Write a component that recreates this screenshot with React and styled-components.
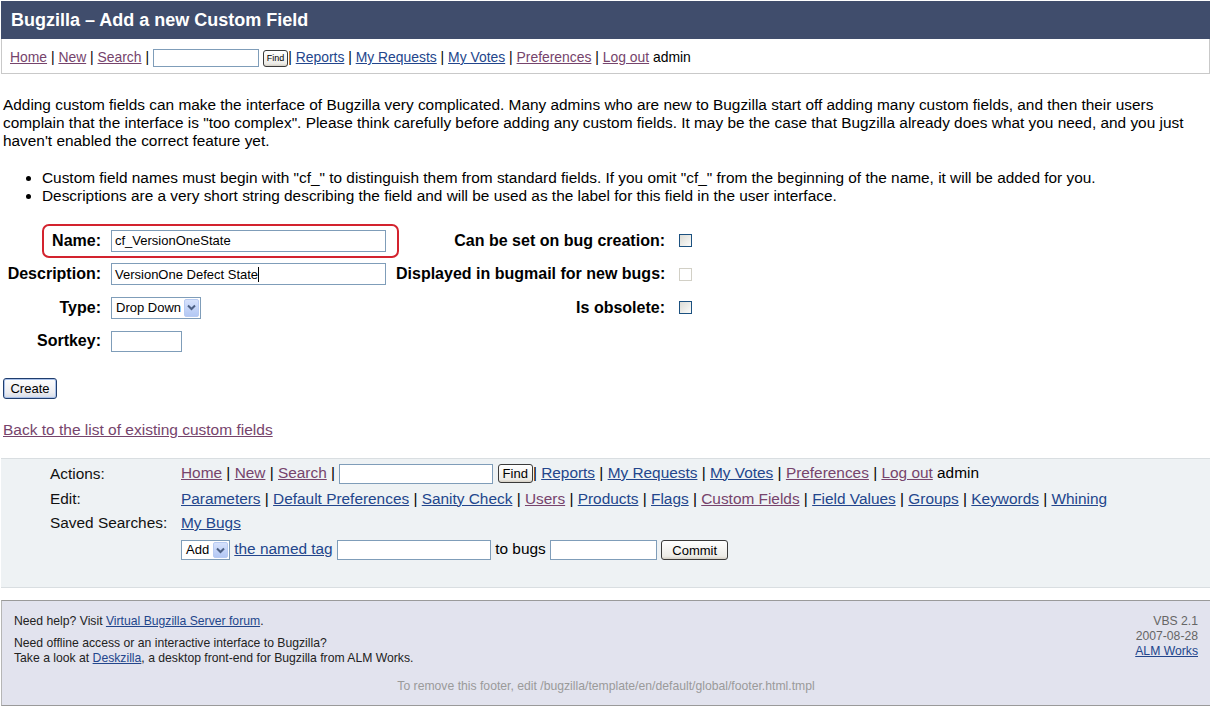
import React from "react";
import styled, { createGlobalStyle } from "styled-components";

const Global = createGlobalStyle`
  html, body { margin: 0; padding: 0; background: #fff; }
  body { font-family: "Liberation Sans", Arial, sans-serif; color: #000; }
  * { box-sizing: border-box; }
`;

const Page = styled.div`
  width: 1211px;
  padding: 1px 1px 0 1px;
`;

const Header = styled.div`
  height: 38px;
  background: #404d6c;
  display: flex;
  align-items: center;
  padding-left: 10px;
`;

const Title = styled.h1`
  margin: 0;
  font-size: 18px;
  font-weight: bold;
  color: #fff;
`;

const NavBar = styled.div`
  height: 35px;
  border: 1px solid #c9c9c9;
  border-top: none;
  padding: 9px 0 0 8px;
  font-size: 13.9px;
  line-height: 18px;
  white-space: nowrap;
`;

const Link = styled.a`
  color: ${(p) => (p.$visited ? "#76446c" : "#23468c")};
  text-decoration: underline;
  cursor: pointer;
`;

const TextBox = styled.input`
  width: ${(p) => p.$w}px;
  height: ${(p) => p.$h || 22}px;
  border: 1px solid #7f9db9;
  padding: 0 3px;
  font-family: "Liberation Sans", Arial, sans-serif;
  font-size: 13px;
  color: #000;
  background: #fff;
  vertical-align: middle;
  outline: none;
`;

const PlainButton = styled.button`
  font-family: "Liberation Sans", Arial, sans-serif;
  font-size: ${(p) => p.$fs || 13}px;
  height: ${(p) => p.$h}px;
  padding: 0 ${(p) => p.$px || 6}px;
  border: 1px solid #3a3a3a;
  border-radius: 3px;
  background: linear-gradient(#ffffff, #ecebe6 85%, #d6d0c5);
  color: #000;
  vertical-align: middle;
  line-height: 1;
`;

const Main = styled.div`
  padding: 0 2px;
`;

const Intro = styled.p`
  margin: 22px 0 0;
  font-size: 15.4px;
  line-height: 18px;
  white-space: nowrap;
`;

const Notes = styled.ul`
  margin: 19px 0 0;
  padding-left: 39px;
  font-size: 15.4px;
  line-height: 18px;
  white-space: nowrap;
`;

const FormGrid = styled.div`
  position: relative;
  margin-top: 19px;
  display: grid;
  grid-template-columns: 98px 275px 269px 20px;
  column-gap: 10px;
  grid-auto-rows: 33.5px;
  align-items: center;
`;

const Label = styled.label`
  text-align: right;
  font-weight: bold;
  font-size: 16px;
  white-space: nowrap;
`;

const Highlight = styled.div`
  position: absolute;
  left: 39px;
  top: 0;
  width: 357px;
  height: 34px;
  border: 2px solid #d3232e;
  border-radius: 7px;
  pointer-events: none;
`;

const Check = styled.span`
  display: block;
  width: 13px;
  height: 13px;
  margin-left: 4px;
  border: 1px solid ${(p) => (p.$disabled ? "#d2d0c6" : "#1c5180")};
  background: ${(p) => (p.$disabled ? "#fff" : "linear-gradient(135deg, #dcdcd6, #fbfbf9)")};
`;

const SelectBox = styled.span`
  display: inline-flex;
  align-items: center;
  justify-content: space-between;
  width: ${(p) => p.$w}px;
  height: ${(p) => p.$h}px;
  border: 1px solid #7f9db9;
  background: #fff;
  padding: 1px 1px 1px 4px;
  font-size: 13px;
  vertical-align: middle;
`;

const ArrowBtn = styled.span`
  display: flex;
  align-items: center;
  justify-content: center;
  width: 15px;
  height: 100%;
  background: linear-gradient(#d6e2fc, #b3c8f4);
  border: 1px solid #b8cbf2;
  border-radius: 2px;
`;

const Chevron = () => (
  <svg width="9" height="7" viewBox="0 0 9 7">
    <path d="M1 1.5 L4.5 5 L8 1.5" fill="none" stroke="#4d6185" strokeWidth="2" />
  </svg>
);

const Caret = styled.span`
  display: inline-block;
  width: 1px;
  height: 15px;
  background: #000;
  vertical-align: middle;
`;

const FakeField = styled.span`
  display: flex;
  align-items: center;
  width: 275px;
  height: 22px;
  border: 1px solid #7f9db9;
  padding: 0 3px;
  font-size: 13px;
  white-space: nowrap;
`;

const CreateButton = styled.button`
  margin-top: 20px;
  display: block;
  width: 54px;
  height: 21px;
  font-family: "Liberation Sans", Arial, sans-serif;
  font-size: 13px;
  color: #000;
  border: 1px solid #1f3d6d;
  border-radius: 3px;
  background: linear-gradient(#fdfdfd, #ecedf2 70%, #d4dbe7);
  box-shadow: inset 0 0 0 1px #a9c1ea;
  padding: 0;
`;

const BackLink = styled(Link)`
  display: block;
  margin-top: 22px;
  font-size: 15.5px;
  line-height: 18px;
  width: max-content;
`;

const ActionsPanel = styled.div`
  margin-top: 19px;
  background: #eef2f4;
  border-top: 1px solid #d9dee1;
  border-bottom: 1px solid #d9dee1;
  padding: 2px 0 22px 49px;
  display: grid;
  grid-template-columns: 131px auto;
  grid-template-rows: 25px 25px 24px 30px;
  align-items: center;
  font-size: 15.4px;
  line-height: 18px;
  white-space: nowrap;
`;

const ActionLabel = styled.span`
  color: #111;
`;

const Footer = styled.div`
  margin-top: 12px;
  background: #e2e3ee;
  border-top: 1px solid #9a9a9a;
  border-bottom: 1px solid #9a9a9a;
  border-left: 1px solid #b5b5b5;
  padding: 13px 12px 12px 12px;
  font-size: 12.2px;
  color: #222;
`;

const FooterTop = styled.div`
  display: flex;
  justify-content: space-between;
`;

const HelpLine = styled.div`
  line-height: 14px;
`;

const Offline = styled.div`
  margin-top: 8px;
  line-height: 15px;
`;

const Version = styled.div`
  text-align: right;
  line-height: 15px;
  color: #666;
`;

const RemoveNote = styled.div`
  margin-top: 13px;
  text-align: center;
  line-height: 14px;
  color: #9a9a9a;
`;

export default function App() {
  return (
    <Page>
      <Global />
      <Header>
        <Title>Bugzilla – Add a new Custom Field</Title>
      </Header>
      <NavBar>
        <Link $visited>Home</Link> | <Link $visited>New</Link> | <Link $visited>Search</Link> |{" "}
        <TextBox $w={106} $h={18} defaultValue="" />{" "}
        <PlainButton $fs={9} $h={17} $px={3}>Find</PlainButton>| <Link>Reports</Link> |{" "}
        <Link>My Requests</Link> | <Link>My Votes</Link> | <Link $visited>Preferences</Link> |{" "}
        <Link $visited>Log out</Link> admin
      </NavBar>
      <Main>
        <Intro>
          Adding custom fields can make the interface of Bugzilla very complicated. Many admins who are new to Bugzilla start off adding many custom fields, and then their users
          <br />
          complain that the interface is "too complex". Please think carefully before adding any custom fields. It may be the case that Bugzilla already does what you need, and you just
          <br />
          haven't enabled the correct feature yet.
        </Intro>
        <Notes>
          <li>Custom field names must begin with "cf_" to distinguish them from standard fields. If you omit "cf_" from the beginning of the name, it will be added for you.</li>
          <li>Descriptions are a very short string describing the field and will be used as the label for this field in the user interface.</li>
        </Notes>
        <FormGrid>
          <Highlight />
          <Label>Name:</Label>
          <TextBox $w={275} defaultValue="cf_VersionOneState" />
          <Label>Can be set on bug creation:</Label>
          <Check />

          <Label>Description:</Label>
          <FakeField>
            VersionOne Defect State<Caret />
          </FakeField>
          <Label>Displayed in bugmail for new bugs:</Label>
          <Check $disabled />

          <Label>Type:</Label>
          <span>
            <SelectBox $w={90} $h={22}>
              Drop Down
              <ArrowBtn><Chevron /></ArrowBtn>
            </SelectBox>
          </span>
          <Label>Is obsolete:</Label>
          <Check />

          <Label>Sortkey:</Label>
          <TextBox $w={71} $h={21} defaultValue="" />
        </FormGrid>
        <CreateButton>Create</CreateButton>
        <BackLink $visited>Back to the list of existing custom fields</BackLink>
      </Main>
      <ActionsPanel>
        <ActionLabel>Actions:</ActionLabel>
        <span>
          <Link $visited>Home</Link> | <Link $visited>New</Link> | <Link $visited>Search</Link> |{" "}
          <TextBox $w={154} $h={20} defaultValue="" />{" "}
          <PlainButton $fs={13} $h={19} $px={4}>Find</PlainButton>| <Link>Reports</Link> |{" "}
          <Link>My Requests</Link> | <Link>My Votes</Link> | <Link $visited>Preferences</Link> |{" "}
          <Link $visited>Log out</Link> admin
        </span>
        <ActionLabel>Edit:</ActionLabel>
        <span>
          <Link>Parameters</Link> | <Link>Default Preferences</Link> | <Link>Sanity Check</Link> |{" "}
          <Link $visited>Users</Link> | <Link>Products</Link> | <Link>Flags</Link> |{" "}
          <Link $visited>Custom Fields</Link> | <Link>Field Values</Link> | <Link>Groups</Link> |{" "}
          <Link>Keywords</Link> | <Link>Whining</Link>
        </span>
        <ActionLabel>Saved Searches:</ActionLabel>
        <span>
          <Link>My Bugs</Link>
        </span>
        <span />
        <span>
          <SelectBox $w={49} $h={20}>
            Add
            <ArrowBtn><Chevron /></ArrowBtn>
          </SelectBox>{" "}
          <Link>the named tag</Link> <TextBox $w={154} $h={20} defaultValue="" /> to bugs{" "}
          <TextBox $w={107} $h={20} defaultValue="" />{" "}
          <PlainButton $fs={13} $h={20} $px={10}>Commit</PlainButton>
        </span>
      </ActionsPanel>
      <Footer>
        <FooterTop>
          <div>
            <HelpLine>
              Need help? Visit <Link>Virtual Bugzilla Server forum</Link>.
            </HelpLine>
            <Offline>
              Need offline access or an interactive interface to Bugzilla?
              <br />
              Take a look at <Link>Deskzilla</Link>, a desktop front-end for Bugzilla from ALM Works.
            </Offline>
          </div>
          <Version>
            VBS 2.1
            <br />
            2007-08-28
            <br />
            <Link>ALM Works</Link>
          </Version>
        </FooterTop>
        <RemoveNote>To remove this footer, edit /bugzilla/template/en/default/global/footer.html.tmpl</RemoveNote>
      </Footer>
    </Page>
  );
}
